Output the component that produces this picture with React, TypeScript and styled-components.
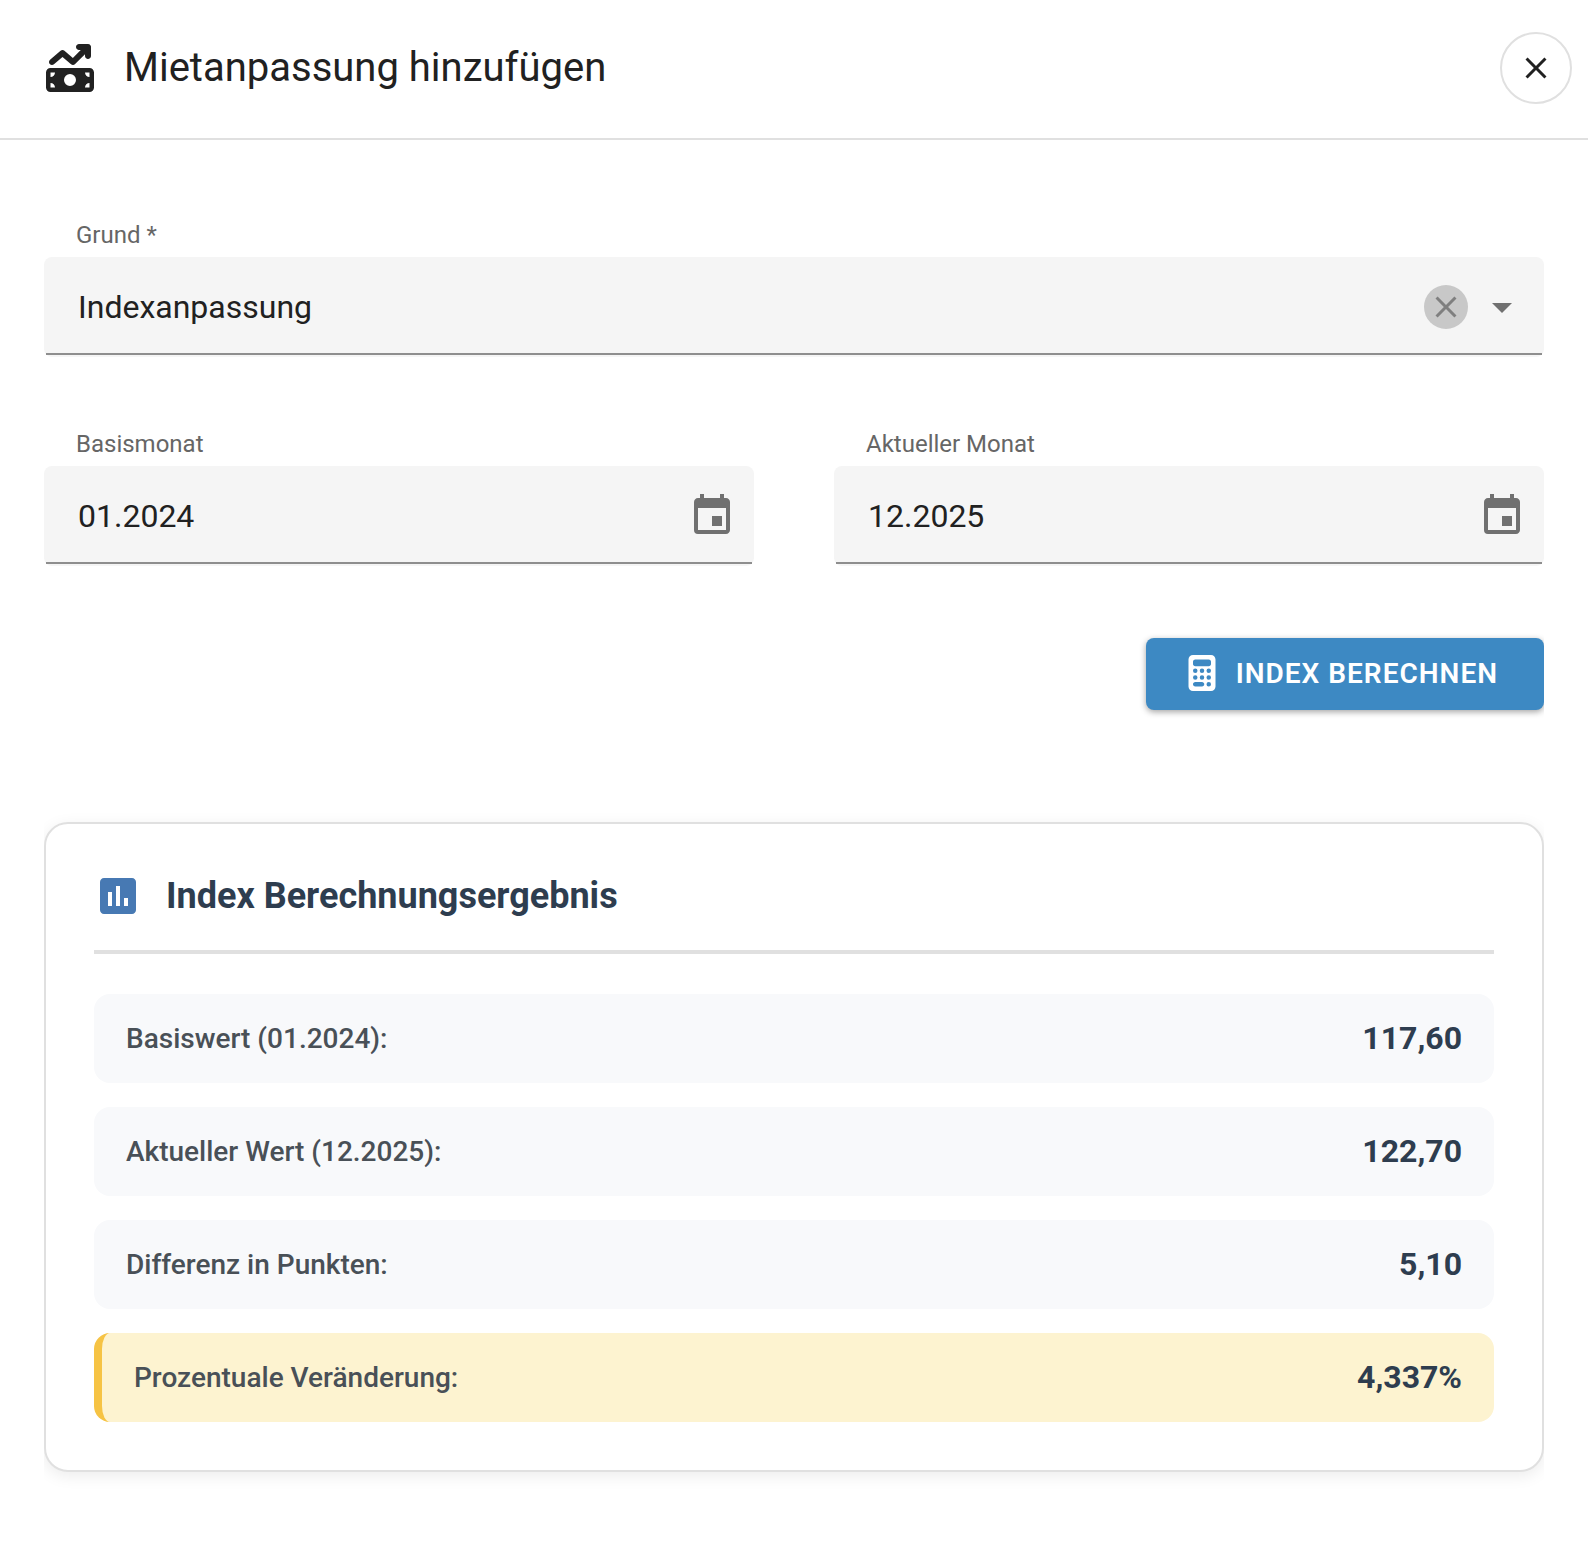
import React, { useState } from 'react';
import styled, { createGlobalStyle } from 'styled-components';
import { FaCalculator, FaMoneyBillTrendUp } from 'react-icons/fa6';
import { MdArrowDropDown, MdAssessment, MdClose, MdEvent } from 'react-icons/md';

const GlobalStyle = createGlobalStyle`
  *, *::before, *::after { box-sizing: border-box; }
  body {
    margin: 0;
    background: #ffffff;
    color: #212121;
    font-family: Roboto, "Liberation Sans", sans-serif;
  }
  button, input, select { font: inherit; color: inherit; }
`;

const Header = styled.header`
  display: flex;
  align-items: center;
  gap: 30px;
  height: 140px;
  padding: 0 16px 2px 46px;
  border-bottom: 2px solid #e0e0e0;
`;

const Title = styled.h1`
  flex: 1;
  margin: 0;
  font-size: 40px;
  line-height: 48px;
  font-weight: 400;
`;

const CloseButton = styled.button`
  display: grid;
  place-items: center;
  width: 72px;
  height: 72px;
  padding: 0;
  border: 2px solid #e0e0e0;
  border-radius: 50%;
  background: #ffffff;
  cursor: pointer;
`;

const Form = styled.form`
  margin: 0 44px;
  padding: 81px 0 72px;
  overflow: hidden;
`;

const FieldRow = styled.div`
  display: grid;
  grid-template-columns: repeat(2, minmax(0, 1fr));
  gap: 80px;
  margin: 73px 0 72px;
`;

const Field = styled.div`
  display: flex;
  flex-direction: column;
  gap: 8px;
`;

const FieldLabel = styled.label`
  padding-left: 32px;
  font-size: 24px;
  line-height: 28px;
  color: #666666;
`;

const FieldBox = styled.div`
  height: 100px;
  padding: 0 2px 2px;
  border-radius: 8px;
  background: #f5f5f5;
`;

const FieldLine = styled.div`
  display: flex;
  align-items: center;
  gap: 10px;
  height: 98px;
  padding: 4px 16px 0 0;
  border-bottom: 2px solid #8e8e8e;
  color: #707070;
`;

const controlStyles = `
  flex: 1;
  min-width: 0;
  height: 90px;
  margin: 0;
  padding: 0 0 0 32px;
  border: 0;
  outline: 0;
  background: transparent;
  color: #212121;
  font-size: 32px;
`;

const Select = styled.select`
  ${controlStyles}
  appearance: none;
`;

const Input = styled.input`
  ${controlStyles}
`;

const ClearButton = styled.button`
  display: grid;
  place-items: center;
  width: 44px;
  height: 44px;
  padding: 0;
  border: 0;
  border-radius: 50%;
  background: #c8c8c8;
  color: #7f7f7f;
  cursor: pointer;
`;

const PickerButton = styled.button`
  display: grid;
  padding: 0;
  border: 0;
  background: transparent;
  color: #707070;
  cursor: pointer;
`;

const Actions = styled.div`
  display: flex;
  justify-content: flex-end;
`;

const PrimaryButton = styled.button`
  display: flex;
  align-items: center;
  gap: 16px;
  height: 72px;
  padding: 0 46px 2px 38px;
  border: 0;
  border-radius: 8px;
  background: #3d89c3;
  box-shadow: 0 2px 6px rgba(0, 0, 0, 0.36);
  color: #ffffff;
  font-size: 28px;
  font-weight: 600;
  letter-spacing: 1px;
  text-transform: uppercase;
  cursor: pointer;
`;

const Card = styled.section`
  margin-top: 112px;
  padding: 48px;
  border: 2px solid #e0e0e0;
  border-radius: 24px;
  background: #ffffff;
  box-shadow: 0 4px 16px rgba(0, 0, 0, 0.08);
`;

const CardHeader = styled.div`
  display: flex;
  align-items: center;
  gap: 24px;
  padding-bottom: 30px;
  border-bottom: 4px solid #e0e0e0;
  color: #4779b3;
`;

const CardTitle = styled.h2`
  margin: 0;
  font-size: 36px;
  line-height: 48px;
  font-weight: 700;
  color: #2e3d4f;
`;

const Results = styled.dl`
  display: flex;
  flex-direction: column;
  gap: 24px;
  margin: 40px 0 0;
`;

const ResultRow = styled.div<{ $highlight?: boolean }>`
  display: flex;
  align-items: center;
  justify-content: space-between;
  padding: 24px 32px;
  border-radius: 16px;
  border-left: ${(p) => (p.$highlight ? '8px solid #f6c344' : '0')};
  background: ${(p) => (p.$highlight ? '#fdf3d0' : '#f8f9fb')};
`;

const ResultLabel = styled.dt`
  font-size: 28px;
  line-height: 41px;
  font-weight: 500;
  color: #495057;
`;

const ResultValue = styled.dd`
  margin: 0;
  font-size: 32px;
  line-height: 41px;
  font-weight: 700;
  color: #2e3d4f;
`;

const results = [
  { label: 'Basiswert (01.2024):', value: '117,60' },
  { label: 'Aktueller Wert (12.2025):', value: '122,70' },
  { label: 'Differenz in Punkten:', value: '5,10' },
  { label: 'Prozentuale Veränderung:', value: '4,337%', highlight: true },
];

function MonthField({ id, label, initial }: { id: string; label: string; initial: string }) {
  const [value, setValue] = useState(initial);
  return (
    <Field>
      <FieldLabel htmlFor={id}>{label}</FieldLabel>
      <FieldBox>
        <FieldLine>
          <Input id={id} type="text" value={value} onChange={(e) => setValue(e.target.value)} />
          <PickerButton type="button" aria-label={`${label} auswählen`}>
            <MdEvent size={48} />
          </PickerButton>
        </FieldLine>
      </FieldBox>
    </Field>
  );
}

export default function App() {
  const [reason, setReason] = useState('index');
  return (
    <>
      <GlobalStyle />
      <Header>
        <FaMoneyBillTrendUp size={48} />
        <Title>Mietanpassung hinzufügen</Title>
        <CloseButton type="button" aria-label="Schließen">
          <MdClose size={36} />
        </CloseButton>
      </Header>
      <Form onSubmit={(e) => e.preventDefault()}>
        <Field>
          <FieldLabel htmlFor="reason">Grund *</FieldLabel>
          <FieldBox>
            <FieldLine>
              <Select id="reason" value={reason} onChange={(e) => setReason(e.target.value)}>
                <option value="" />
                <option value="index">Indexanpassung</option>
              </Select>
              <ClearButton type="button" aria-label="Auswahl löschen" onClick={() => setReason('')}>
                <MdClose size={36} />
              </ClearButton>
              <MdArrowDropDown size={48} />
            </FieldLine>
          </FieldBox>
        </Field>
        <FieldRow>
          <MonthField id="base-month" label="Basismonat" initial="01.2024" />
          <MonthField id="current-month" label="Aktueller Monat" initial="12.2025" />
        </FieldRow>
        <Actions>
          <PrimaryButton type="submit">
            <FaCalculator size={36} />
            Index berechnen
          </PrimaryButton>
        </Actions>
        <Card>
          <CardHeader>
            <MdAssessment size={48} />
            <CardTitle>Index Berechnungsergebnis</CardTitle>
          </CardHeader>
          <Results>
            {results.map((row) => (
              <ResultRow key={row.label} $highlight={row.highlight}>
                <ResultLabel>{row.label}</ResultLabel>
                <ResultValue>{row.value}</ResultValue>
              </ResultRow>
            ))}
          </Results>
        </Card>
      </Form>
    </>
  );
}
